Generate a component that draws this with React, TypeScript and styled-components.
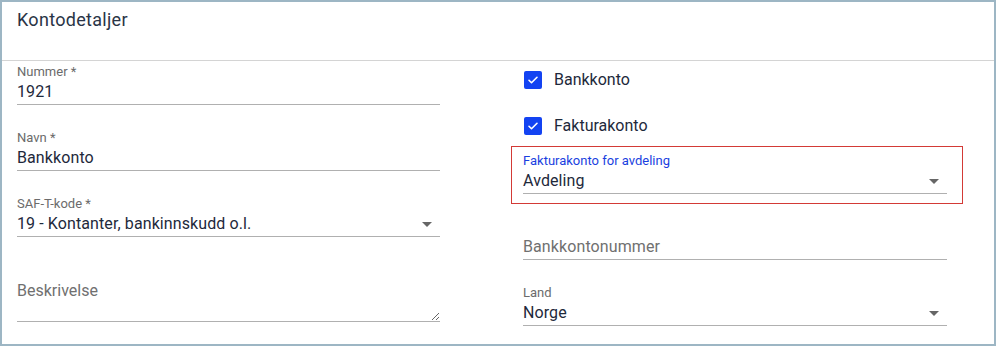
import React from "react";
import styled, {createGlobalStyle} from "styled-components";

const GlobalStyle = createGlobalStyle`
  html, body {
    margin: 0;
    padding: 0;
    background: #ffffff;
  }
  body {
    font-family: Roboto, "Liberation Sans", Arial, sans-serif;
  }
`;

const Frame = styled.div`
  box-sizing: border-box;
  width: 996px;
  height: 346px;
  border: 2px solid #9db6c4;
  background: #ffffff;
  overflow: hidden;
`;

const Header = styled.div`
  box-sizing: border-box;
  height: 59px;
  padding: 8px 15px 0;
  border-bottom: 1px solid #d4d4d4;
`;

const Title = styled.h2`
  margin: 0;
  font-size: 18px;
  font-weight: 400;
  line-height: 20px;
  letter-spacing: 0.3px;
  color: #2a3446;
`;

const Body = styled.div`
  display: grid;
  grid-template-columns: 423px 452px;
  column-gap: 71px;
  padding: 1px 0 0 15px;
`;

const Column = styled.div`
  display: flex;
  flex-direction: column;
`;

const Field = styled.div<{$top: number}>`
  display: flex;
  flex-direction: column;
  margin-top: ${(p) => p.$top}px;
`;

const Label = styled.label<{$focused?: boolean}>`
  display: block;
  height: 14px;
  margin-bottom: 3px;
  font-size: 13px;
  line-height: 14px;
  color: ${(p) => (p.$focused ? "#1a3fe0" : "#6b6b6b")};
  white-space: nowrap;
`;

const ValueRow = styled.div`
  display: flex;
  align-items: center;
  height: 20px;
  padding-bottom: 2px;
  border-bottom: 1px solid #b0b0b0;
`;

const Value = styled.span<{$placeholder?: boolean}>`
  flex: 1;
  font-size: 16px;
  line-height: 20px;
  letter-spacing: 0.1px;
  color: ${(p) => (p.$placeholder ? "#707070" : "#1e293b")};
  white-space: nowrap;
`;

const Caret = styled.span`
  width: 0;
  height: 0;
  margin-right: 8px;
  border-left: 5px solid transparent;
  border-right: 5px solid transparent;
  border-top: 5px solid #666666;
`;

const TextArea = styled.textarea`
  box-sizing: border-box;
  display: block;
  width: 100%;
  height: 41px;
  margin: 0;
  padding: 0;
  border: none;
  border-bottom: 1px solid #b0b0b0;
  font-family: inherit;
  font-size: 16px;
  line-height: 20px;
  color: #1e293b;
  background: transparent;
  outline: none;
  &::placeholder {
    color: #707070;
    opacity: 1;
  }
`;

const Pad = styled.div<{$top: number}>`
  margin-top: ${(p) => p.$top}px;
  padding: 0 16px 0 12px;
`;

const CheckRow = styled.div`
  display: flex;
  align-items: center;
  height: 36px;
  padding-left: 1px;
  gap: 12px;
`;

const Box = styled.span`
  display: flex;
  align-items: center;
  justify-content: center;
  width: 18px;
  height: 18px;
  border-radius: 2px;
  background: #1343f2;
`;

const CheckText = styled.span`
  font-size: 16px;
  line-height: 20px;
  color: #1e293b;
`;

const Highlight = styled.div`
  box-sizing: border-box;
  margin-top: 2px;
  height: 58px;
  padding: 7px 15px 0 11px;
  border: 1px solid #d33a36;
`;

const Check = ({label}: {label: string}) => (
  <CheckRow>
    <Box>
      <svg width="12" height="12" viewBox="0 0 24 24" fill="none">
        <path d="M4 12.5l5 5L20 6.5" stroke="#ffffff" strokeWidth="3.2" strokeLinecap="round" strokeLinejoin="round" />
      </svg>
    </Box>
    <CheckText>{label}</CheckText>
  </CheckRow>
);

const App = () => (
  <>
    <GlobalStyle />
    <Frame>
      <Header>
        <Title>Kontodetaljer</Title>
      </Header>
      <Body>
        <Column>
          <Field $top={3}>
            <Label>Nummer *</Label>
            <ValueRow>
              <Value>1921</Value>
            </ValueRow>
          </Field>
          <Field $top={26}>
            <Label>Navn *</Label>
            <ValueRow>
              <Value>Bankkonto</Value>
            </ValueRow>
          </Field>
          <Field $top={26}>
            <Label>SAF-T-kode *</Label>
            <ValueRow>
              <Value>19 - Kontanter, bankinnskudd o.l.</Value>
              <Caret />
            </ValueRow>
          </Field>
          <Field $top={27}>
            <Label />
            <TextArea placeholder="Beskrivelse" rows={2} />
          </Field>
        </Column>
        <Column>
          <Pad $top={0}>
            <Check label="Bankkonto" />
          </Pad>
          <Pad $top={10}>
            <Check label="Fakturakonto" />
          </Pad>
          <Highlight>
            <Field $top={0}>
              <Label $focused>Fakturakonto for avdeling</Label>
              <ValueRow>
                <Value>Avdeling</Value>
                <Caret />
              </ValueRow>
            </Field>
          </Highlight>
          <Pad $top={16}>
            <Field $top={0}>
              <Label />
              <ValueRow>
                <Value $placeholder>Bankkontonummer</Value>
              </ValueRow>
            </Field>
          </Pad>
          <Pad $top={26}>
            <Field $top={0}>
              <Label>Land</Label>
              <ValueRow>
                <Value>Norge</Value>
                <Caret />
              </ValueRow>
            </Field>
          </Pad>
        </Column>
      </Body>
    </Frame>
  </>
);

export default App;
